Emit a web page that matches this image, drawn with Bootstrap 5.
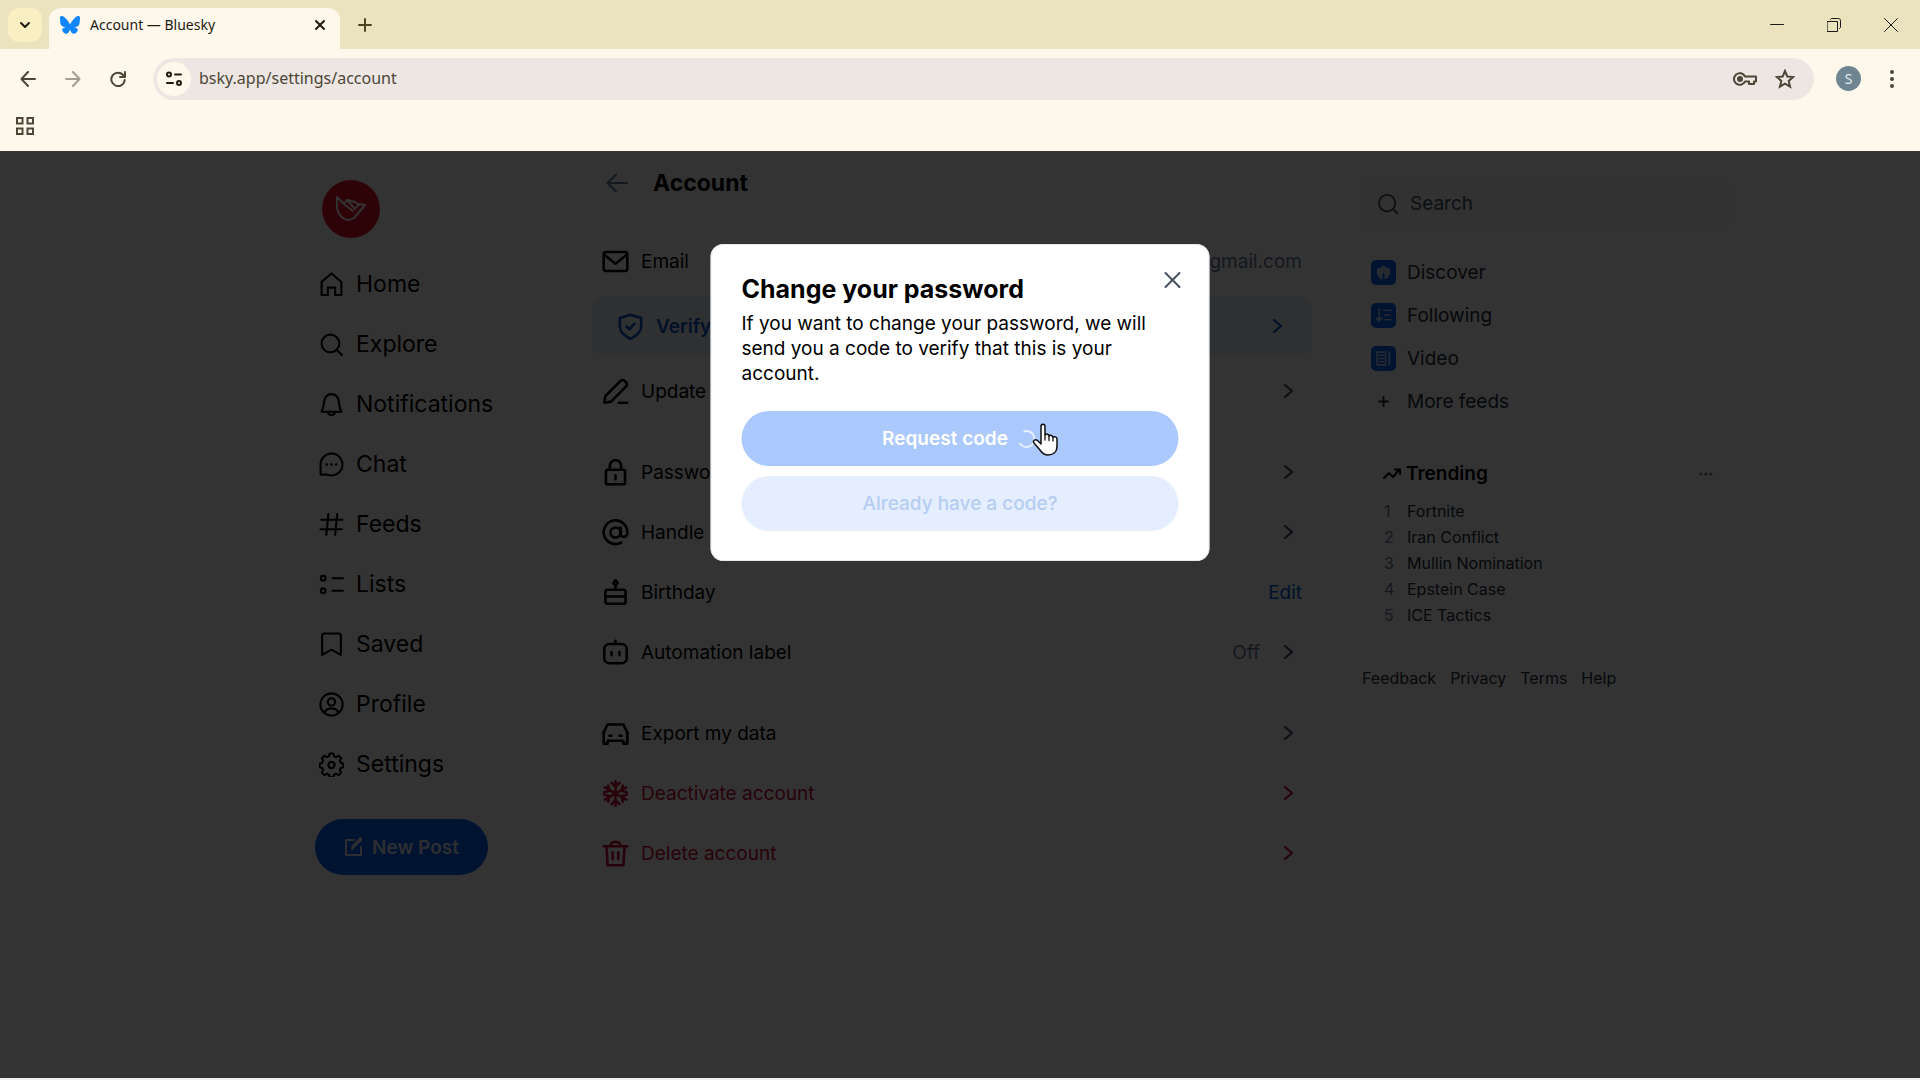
<!DOCTYPE html>
<html lang="en">
<head>
<meta charset="utf-8">
<meta name="viewport" content="width=device-width, initial-scale=1">
<title>Account — Bluesky</title>
<link rel="stylesheet" href="https://cdn.jsdelivr.net/npm/bootstrap@5.3.0/dist/css/bootstrap.min.css">
<style>
body{font-family:Inter,"Liberation Sans",sans-serif;font-size:19px;line-height:25px;color:#000;background:#eef0ee;overflow:hidden}
svg{display:block;flex:none;fill:none;stroke:currentColor;stroke-width:2;stroke-linejoin:round;stroke-linecap:round}
button{border:0;background:none;padding:0;color:inherit}
a{color:inherit;text-decoration:none}
/* browser frame */
.chrome{font-family:"Noto Sans","Open Sans",sans-serif;background:#fef8ec;color:#4c4637}
.tabstrip{height:49px;background:#ebe2be;padding-left:8px;padding-right:22px}
.tab-search{width:34px;height:34px;border-radius:11px;background:#f9efc3;color:#1e1b12;margin-top:8px}
.tab-open{width:291px;height:41px;gap:10px;margin:8px 0 0 7px;padding:0 14px 7px 11px;border-radius:12px 12px 0 0;background:#fef8ec;color:#1e1b12;font-size:14px;line-height:20px}
.tab-new{margin:0 0 0 18px;color:#4c4420}
.win-keys{gap:43px;color:#1a1a1a}
.win-keys svg{stroke-width:1}
.toolbar-row{height:59px;padding:0 25px 0 20px}
.nav-keys{gap:29px}
.address{height:42px;border-radius:21px;background:#eee6e3;padding:0 19px 0 4px;margin:0 22px 0 27px}
.site-info{width:34px;height:34px;border-radius:17px;background:#fef8ec;color:#1e1b12}
.address input{border:0;background:none;color:#4c4637;outline:0;font-size:16px;padding:0;min-width:0}
.key-btn{margin-right:18px}
.user-dot{width:25px;height:25px;border-radius:13px;background:#6f8591;color:#e3edf2;font-size:14px;line-height:25px}
.marks-row{height:43px;padding:0 16px 8px}
/* app */
.app{overflow:hidden;background:#fff;margin-bottom:2px}
.page-cols{padding-right:16px}
.side-l{width:403px;padding:29px 0 0 141px}
.face{width:58px;height:58px;border-radius:29px;background:#e0122c;color:#fff;margin:0 0 16px 7px}
.side-l nav a{height:60px;padding-left:4px;gap:12px;font-size:23px;line-height:30px}
.post-btn{height:56px;width:173px;margin-top:25px;border-radius:28px;background:#0062f0;color:#dfe6f5;font-weight:600;gap:8px}
.main-c{width:750px}
.main-head{height:64px;padding:0 29px;gap:25px;margin-bottom:16px}
.main-head h1{font-size:23px;line-height:30px;font-weight:700}
.set-row{height:60px;padding:0 25px;gap:12px}
.set-row svg{stroke-width:2.300}
.set-row .go{margin:0 4px;color:#405168}
.set-row.verify{margin:5px 15px;border-radius:12px;background:#e9f0fb;color:#0a50c8;font-weight:600}
.set-row.verify .go{margin:0;color:#0a50c8}
.rule{height:1px;margin:10px 0;background:#f8f9fa}
.soft{color:#667b99}
.edit-link{color:#0062d8}
.danger-row,.set-row.danger-row .go{color:#c60b39}
.side-r{width:403px;padding:25px 0 0 35px}
.find{height:55px;border-radius:12px;background:#f8f9fa;padding-left:15px;gap:11px;color:#405168;margin-bottom:20px}
.find input{border:0;background:none;outline:0;padding:0;min-width:0}
.find input::placeholder{color:#405168;opacity:1}
.feeds a{height:43px;padding-left:9px;gap:11px;color:#232e3e}
.feed-ic{width:25px;height:25px;border-radius:5px;background:#0062f0;color:#c3d6f5}
.trend{padding:38px 17px 0 20px}
.trend h2{font-size:19px;line-height:25px;font-weight:600;margin:0}
.trend ol{list-style:none;padding:0;margin:12px 0 0 2px;font-size:16px;line-height:26px;color:#232e3e}
.trend li{gap:15px}
.trend li span{width:8px;color:#667b99}
.foot{gap:14px;margin-top:38px;font-size:16px;line-height:25px;color:#232e3e}
.shade{position:absolute;inset:0;background:rgba(0,0,0,.8)}
.ask{position:absolute;top:93px;left:50%;transform:translateX(-50%);width:499px;padding:31px 31px 30px;border-radius:13px;background:#fff;box-shadow:inset 0 0 0 1px #e6e8eb}
.ask h2{font-size:25px;line-height:28px;font-weight:700;margin-bottom:8px}
.ask-x{position:absolute;top:23px;right:24px;color:#45505e}
.ask-btn{height:55px;border-radius:28px;font-weight:600}
.ask-go{background:#abc9fc;color:#fff;margin:25px 0 10px}
.ask-have{background:#e5eefe;color:#b5cdf2;font-weight:500}
.hand{position:absolute;left:1032px;top:423px;stroke:none}
</style>
</head>
<body class="d-flex flex-column vh-100 position-relative">
<svg class="d-none"><symbol id="chev" viewBox="0 0 18 18"><path d="M5 3l7 6-7 6"/></symbol></svg>
<header class="chrome">
  <div class="tabstrip d-flex">
    <button class="tab-search d-flex align-items-center justify-content-center" aria-label="Search tabs"><svg width="12" height="12" viewBox="0 0 12 12"><path d="M2 4l4 4 4-4"/></svg></button>
    <div class="tab-open d-flex align-items-center">
      <svg width="20" height="18" viewBox="0 0 64 57" style="fill:#1185fe;stroke:none"><path d="M13.9 3.8C21.200 9.300 29.100 20.500 32 26.500c2.900-6 10.800-17.200 18.100-22.700C55.400-.1 64-3.200 64 6.600c0 2-1.100 16.500-1.800 18.900-2.300 8.200-10.700 10.300-18.100 9 13 2.200 16.300 9.600 9.200 16.900C39.700 65.400 33.800 48 32 43.100 30.200 48 24.300 65.400 10.700 51.400c-7.100-7.300-3.800-14.700 9.200-16.900-7.400 1.300-15.800-.8-18.100-9C1.100 23.100 0 8.600 0 6.600 0-3.200 8.600-.1 13.900 3.800Z"/></svg>
      <span class="flex-grow-1">Account — Bluesky</span>
      <button aria-label="Close tab"><svg width="12" height="12" viewBox="0 0 12 12"><path d="M2 2l8 8M10 2l-8 8"/></svg></button>
    </div>
    <button class="tab-new" aria-label="New tab"><svg width="14" height="14" viewBox="0 0 14 14"><path d="M7 1v12M1 7h12"/></svg></button>
    <div class="win-keys ms-auto d-flex align-items-center">
      <button aria-label="Minimize"><svg width="14" height="14" viewBox="0 0 14 14"><path d="M.5 6.500h13"/></svg></button>
      <button aria-label="Restore"><svg width="14" height="14" viewBox="0 0 14 14"><path d="M.5 3.500h10v10h-10zM3.500 1.500a2 2 0 0 1 1-1h7a2 2 0 0 1 2 2v7l-1 1"/></svg></button>
      <button aria-label="Close"><svg width="14" height="14" viewBox="0 0 14 14"><path d="M.5.500l13 13M13.500.500l-13 13"/></svg></button>
    </div>
  </div>
  <div class="toolbar-row d-flex align-items-center">
    <div class="nav-keys d-flex align-items-center">
      <button aria-label="Back"><svg width="16" height="16" viewBox="0 0 16 16"><path d="M15 8H2M8 1L1.500 8 8 15"/></svg></button>
      <button aria-label="Forward" class="opacity-50"><svg width="16" height="16" viewBox="0 0 16 16"><path d="M1 8h13M8 1l6.500 7L8 15"/></svg></button>
      <button aria-label="Reload"><svg width="16" height="16" viewBox="0 0 16 16"><path d="M13.500 4.500A6.700 6.700 0 1 0 14.700 9M15 1v5h-5"/></svg></button>
    </div>
    <div class="address flex-grow-1 d-flex align-items-center">
      <button class="site-info d-flex align-items-center justify-content-center" aria-label="Site information"><svg width="16" height="16" viewBox="0 0 16 16"><circle cx="3" cy="3.500" r="2"/><path d="M9 3.500h6M1 12h6"/><circle cx="13" cy="12" r="2"/></svg></button>
      <input class="flex-grow-1 ms-2" aria-label="Address" value="bsky.app/settings/account">
      <button aria-label="Passwords" class="key-btn"><svg width="24" height="16" viewBox="0 0 24 16"><path d="M12 5.500A5.800 5.800 0 1 0 12 10.500h4V13h5v-2.500h2v-5z"/><circle cx="7" cy="8" r="2" fill="currentColor"/></svg></button>
      <button aria-label="Bookmark"><svg width="20" height="20" viewBox="0 0 20 20"><path stroke-linejoin="miter" d="M10 2l2.300 5.500 6 .5-4.600 3.900 1.400 5.800L10 14.600l-5.100 3.100 1.400-5.800L1.700 8l6-.5z"/></svg></button>
    </div>
    <button class="user-dot" aria-label="Profile S">S</button>
    <button aria-label="Menu" class="ms-4 ps-1"><svg width="6" height="20" viewBox="0 0 6 20" style="fill:currentColor;stroke:none"><circle cx="3" cy="3" r="2"/><circle cx="3" cy="10" r="2"/><circle cx="3" cy="17" r="2"/></svg></button>
  </div>
  <div class="marks-row d-flex align-items-center">
    <button aria-label="Apps"><svg width="18" height="18" viewBox="0 0 18 18" style="stroke-linejoin:miter"><path d="M1 1h5.500v5.500H1zM11.500 1H17v5.500h-5.500zM1 11.500h5.500V17H1zM11.500 11.500H17V17h-5.500z"/></svg></button>
  </div>
</header>

<div class="app position-relative flex-grow-1">
  <div class="page-cols d-flex justify-content-center">
    <aside class="side-l">
      <div class="face d-flex align-items-center justify-content-center"><svg width="30" height="26" viewBox="0 0 30 26"><path d="M1 1c-1 8 0 17 6 21 4 3 8 2 11 0l11-13-6-1-4 5L11 4 8 8z"/><path d="M11 4l8 2 4 3M9 9l8 6"/></svg></div>
      <nav>
        <a href="#" class="d-flex align-items-center"><svg width="25" height="25" viewBox="0 0 24 24"><path d="M2.500 9.500L12 1.500l9.500 8V22h-6v-7h-7v7h-6z" stroke-linejoin="miter"/></svg>Home</a>
        <a href="#" class="d-flex align-items-center"><svg width="25" height="25" viewBox="0 0 24 24"><circle cx="11" cy="11" r="8.500"/><path d="M17 17l5 5"/></svg>Explore</a>
        <a href="#" class="d-flex align-items-center"><svg width="25" height="25" viewBox="0 0 24 24"><path d="M5 9a7 7 0 0 1 14 0c.5 4 1 7 2.500 10h-19C4 16 4.500 13 5 9zM8.500 19.500a3.700 3.700 0 0 0 7 0"/></svg>Notifications</a>
        <a href="#" class="d-flex align-items-center"><svg width="25" height="25" viewBox="0 0 24 24"><path d="M12 1.500a10.500 10.500 0 1 1-4 20.200H1.500V12A10.500 10.500 0 0 1 12 1.500z"/><path d="M7.500 12h0M12 12h0M16.500 12h0" stroke-width="2.600"/></svg>Chat</a>
        <a href="#" class="d-flex align-items-center"><svg width="25" height="25" viewBox="0 0 24 24"><path d="M9 2L7 22M17.500 2l-2 20M2 7.500h20.500M1.500 16.500H22"/></svg>Feeds</a>
        <a href="#" class="d-flex align-items-center"><svg width="25" height="25" viewBox="0 0 24 24"><circle cx="4" cy="6" r="2.300"/><circle cx="4" cy="18" r="2.300"/><path d="M13 6h10M13 18h10"/></svg>Lists</a>
        <a href="#" class="d-flex align-items-center"><svg width="25" height="25" viewBox="0 0 24 24"><path d="M3 3.500Q3 1.500 5 1.500h14q2 0 2 2V22l-9-5-9 5z"/></svg>Saved</a>
        <a href="#" class="d-flex align-items-center"><svg width="25" height="25" viewBox="0 0 24 24"><circle cx="12" cy="12" r="10.700"/><circle cx="12" cy="9.500" r="3.500"/><path d="M5.500 19.500c2.500-5 10.500-5 13 0"/></svg>Profile</a>
        <a href="#" class="d-flex align-items-center"><svg width="25" height="25" viewBox="0 0 24 24"><path d="M10.300 1.500h3.400l.8 2.600 1.900.8 2.500-1.300 2.400 2.400-1.300 2.500.8 1.900 2.600.8v3.400l-2.600.8-.8 1.900 1.300 2.500-2.400 2.400-2.500-1.300-1.900.8-.8 2.600h-3.400l-.8-2.600-1.900-.8-2.500 1.300-2.400-2.400L4 17.300l-.8-1.900-2.600-.8v-3.400l2.600-.8.8-1.900L2.700 6l2.400-2.400 2.500 1.300 1.900-.8z"/><circle cx="12" cy="12.500" r="3"/></svg>Settings</a>
      </nav>
      <button class="post-btn d-flex align-items-center justify-content-center"><svg width="20" height="20" viewBox="0 0 20 20"><path d="M10 3H2v15h15v-8M17.500 2.500l-8 8L8 12l.5-3 8-8z"/></svg>New Post</button>
    </aside>

    <main class="main-c">
      <div class="main-head d-flex align-items-center">
        <a href="#" aria-label="Back" class="soft"><svg width="22" height="20" viewBox="0 0 22 20"><path d="M21 10H2M10 1.500L1.500 10l8.500 8.500"/></svg></a>
        <h1 class="mb-0">Account</h1>
      </div>
      <div class="set-row d-flex align-items-center"><svg width="27" height="27" viewBox="0 0 24 24"><rect x="1.500" y="3.500" width="21" height="17" rx="2"/><path d="M2 6l10 8 10-8"/></svg><span class="flex-grow-1">Email</span><span class="soft">gmail.com</span></div>
      <a href="#" class="set-row verify d-flex align-items-center"><svg width="27" height="27" viewBox="0 0 24 24"><path d="M12 1.500l9.500 3V12c0 5-4.500 8.500-9.500 11-5-2.500-9.500-6-9.500-11V4.500zM8.500 12l2.500 2.500 4.500-5"/></svg><span class="flex-grow-1">Verify</span><svg class="go" width="18" height="18"><use href="#chev"/></svg></a>
      <a href="#" class="set-row d-flex align-items-center"><svg width="27" height="27" viewBox="0 0 24 24"><path d="M2 22l1-6L16.500 2.500c1-1 2.500-1 3.500 0l1.500 1.500c1 1 1 2.500 0 3.500L8 21zM15 22h7.500"/></svg><span class="flex-grow-1">Update</span><svg class="go" width="18" height="18"><use href="#chev"/></svg></a>
      <div class="rule"></div>
      <a href="#" class="set-row d-flex align-items-center"><svg width="27" height="27" viewBox="0 0 24 24"><rect x="3.500" y="9.500" width="17" height="13" rx="1.500"/><path d="M7 9.500V6a5 5 0 0 1 10 0v3.500M12 14.500v3.500"/></svg><span class="flex-grow-1">Password</span><svg class="go" width="18" height="18"><use href="#chev"/></svg></a>
      <a href="#" class="set-row d-flex align-items-center"><svg width="27" height="27" viewBox="0 0 24 24"><circle cx="12" cy="12" r="4.500"/><path d="M16.500 7.500V13c0 4 6 4 6-1A10.500 10.500 0 1 0 17 21"/></svg><span class="flex-grow-1">Handle</span><svg class="go" width="18" height="18"><use href="#chev"/></svg></a>
      <div class="set-row d-flex align-items-center"><svg width="27" height="27" viewBox="0 0 24 24"><path d="M3 11.500q0-2 2-2h14q2 0 2 2V20q0 2-2 2H5q-2 0-2-2zM3 15.500h18M12 9V6"/><path d="M12 1l2 2.500L12 6l-2-2.500z"/></svg><span class="flex-grow-1">Birthday</span><a href="#" class="edit-link">Edit</a></div>
      <a href="#" class="set-row d-flex align-items-center"><svg width="27" height="27" viewBox="0 0 24 24"><rect x="2" y="4.500" width="20" height="17" rx="4.500"/><path d="M12 4V1.500M8.500 11.500v3M15.500 11.500v3"/></svg><span class="flex-grow-1">Automation label</span><span class="soft me-1">Off</span><svg class="go" width="18" height="18"><use href="#chev"/></svg></a>
      <div class="rule"></div>
      <a href="#" class="set-row d-flex align-items-center"><svg width="27" height="27" viewBox="0 0 24 24"><path d="M1.500 21V11l3.500-7h14l3.500 7v10h-3.500v-2.500H5V21zM1 11.500h1M22 11.500h1M6.500 14h2M15.500 14h2"/></svg><span class="flex-grow-1">Export my data</span><svg class="go" width="18" height="18"><use href="#chev"/></svg></a>
      <a href="#" class="set-row danger-row d-flex align-items-center"><svg width="27" height="27" viewBox="0 0 24 24"><path d="M12 1v22M2.500 6.500l19 11M21.500 6.500l-19 11M8.500 2.500L12 6l3.500-3.500M8.500 21.500L12 18l3.500 3.500M2 11l4.500-1.500L5.500 5M22 13l-4.500 1.500 1 4.500M22 11l-4.500-1.500L18.500 5M2 13l4.500 1.500-1 4.500"/></svg><span class="flex-grow-1">Deactivate account</span><svg class="go" width="18" height="18"><use href="#chev"/></svg></a>
      <a href="#" class="set-row danger-row d-flex align-items-center"><svg width="27" height="27" viewBox="0 0 24 24"><path d="M1.500 5.500h21M4 6l1 16.500h14L20 6M7.500 5c1-4.500 8-4.500 9 0M9.500 11v6M14.500 11v6"/></svg><span class="flex-grow-1">Delete account</span><svg class="go" width="18" height="18"><use href="#chev"/></svg></a>
    </main>

    <aside class="side-r">
      <label class="find d-flex align-items-center"><svg width="22" height="22" viewBox="0 0 24 24"><circle cx="11" cy="11" r="9"/><path d="M18 18l4.500 4.500"/></svg><input type="search" class="flex-grow-1" placeholder="Search" aria-label="Search"></label>
      <div class="feeds">
        <a href="#" class="d-flex align-items-center"><span class="feed-ic d-flex align-items-center justify-content-center"><svg width="17" height="17" viewBox="0 0 16 16" style="fill:currentColor;stroke:none"><path d="M8 1l3 2.500 3 .5.500 5L11 14H9v-4L8 8l-1 2v4H5L1.500 9 2 4l3-.5z"/></svg></span>Discover</a>
        <a href="#" class="d-flex align-items-center"><span class="feed-ic d-flex align-items-center justify-content-center"><svg width="17" height="17" viewBox="0 0 16 16" style="stroke-width:1.500"><path d="M4 2v11M1.500 10.500L4 13l2.500-2.500M8 3h7M9 7.500h5M9 12h6"/></svg></span>Following</a>
        <a href="#" class="d-flex align-items-center"><span class="feed-ic d-flex align-items-center justify-content-center"><svg width="17" height="17" viewBox="0 0 16 16" style="stroke-width:1.500"><path d="M2 2h8v12H2zM13.500 2v12M4 5h4M4 8h4M4 11h4"/></svg></span>Video</a>
        <a href="#" class="d-flex align-items-center"><svg width="25" height="25" viewBox="0 0 25 25"><path d="M12.500 8v9M8 12.500h9"/></svg>More feeds</a>
      </div>
      <section class="trend">
        <div class="d-flex align-items-center"><svg width="20" height="18" viewBox="0 0 20 18"><path d="M2 13l5-5 4 4 6-7M13 4.500h5V9"/></svg><h2 class="flex-grow-1 ms-1">Trending</h2><button aria-label="Trending options" class="soft"><svg width="14" height="4" viewBox="0 0 14 4" style="fill:currentColor;stroke:none"><circle cx="2" cy="2" r="1.500"/><circle cx="7" cy="2" r="1.500"/><circle cx="12" cy="2" r="1.500"/></svg></button></div>
        <ol>
          <li class="d-flex"><span>1</span><a href="#">Fortnite</a></li>
          <li class="d-flex"><span>2</span><a href="#">Iran Conflict</a></li>
          <li class="d-flex"><span>3</span><a href="#">Mullin Nomination</a></li>
          <li class="d-flex"><span>4</span><a href="#">Epstein Case</a></li>
          <li class="d-flex"><span>5</span><a href="#">ICE Tactics</a></li>
        </ol>
      </section>
      <div class="foot d-flex"><a href="#">Feedback</a><a href="#">Privacy</a><a href="#">Terms</a><a href="#">Help</a></div>
    </aside>
  </div>
  <div class="shade"></div>
  <section class="ask" role="dialog" aria-labelledby="ask-title">
    <button class="ask-x" aria-label="Close dialog"><svg width="26" height="26" viewBox="0 0 26 26"><path d="M6 6l14 14M20 6L6 20"/></svg></button>
    <h2 id="ask-title">Change your password</h2>
    <p class="mb-0">If you want to change your password, we will send you a code to verify that this is your account.</p>
    <button class="ask-btn ask-go w-100 d-flex align-items-center justify-content-center">Request code<svg class="ms-2" width="22" height="22" viewBox="0 0 22 22" style="stroke-linecap:butt"><path d="M8 3.500a8 8 0 1 1-4 11.500" opacity=".7"/></svg></button>
    <button class="ask-btn ask-have w-100">Already have a code?</button>
  </section>
</div>
<svg class="hand" width="26" height="34" viewBox="0 0 26 34"><path d="M9 3.500C9 .500 13 .500 13 3.500V12c1-1.500 4-1 4 1 1-1.300 4-.6 4 1.200 1-1 4-.4 4 1.800v7c0 6-4 9-9 9-4 0-6-2-8-5L2 20c-1.500-2 1-4.500 3.500-2.500L9 21z" fill="#fff" stroke="#111" stroke-width="1.500"/><path d="M13 12v5M17 13v4.500M21 14.500V18" stroke="#111" stroke-width="1.300"/></svg>
<script src="https://cdn.jsdelivr.net/npm/bootstrap@5.3.0/dist/js/bootstrap.bundle.min.js"></script>
</body>
</html>
